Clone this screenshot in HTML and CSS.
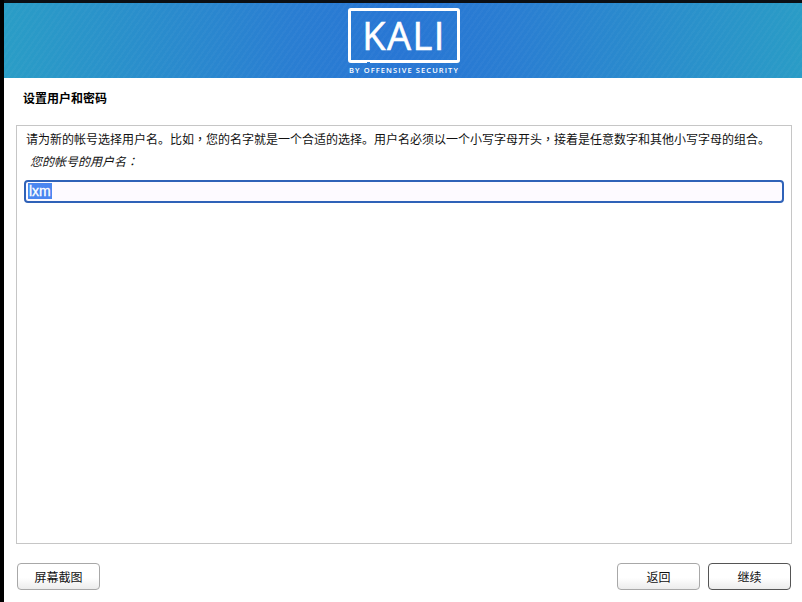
FILE: index.html
```
<!DOCTYPE html>
<html lang="zh-CN">
<head>
<meta charset="utf-8">
<title>设置用户和密码</title>
<link rel="stylesheet" href="styles.css">
</head>
<body>
<div class="edge"></div>
<div class="screen">
  <header class="banner">
    <div class="logo">
      <div class="logo-box"><span class="logo-word">KALI</span></div>
      <div class="logo-sub">BY OFFENSIVE SECURITY</div>
    </div>
  </header>
  <h1 class="title">设置用户和密码</h1>
  <main class="panel">
    <p class="desc">请为新的帐号选择用户名。比如<span class="punct" lang="zh-TW">，</span>您的名字就是一个合适的选择。用户名必须以一个小写字母开头<span class="punct" lang="zh-TW">，</span>接着是任意数字和其他小写字母的组合。</p>
    <p class="label">您的帐号的用户名<span class="punct" lang="zh-TW">：</span></p>
    <div class="field"><span class="sel">lxm</span></div>
  </main>
  <footer class="actions">
    <button class="btn">屏幕截图</button>
    <div class="right">
      <button class="btn btn-back">返回</button>
      <button class="btn btn-next">继续</button>
    </div>
  </footer>
</div>
</body>
</html>
```
FILE: styles.css
```
* { box-sizing: border-box; }
html, body { margin: 0; padding: 0; height: 100%; }
body {
  width: 802px; height: 602px; overflow: hidden; background: #fff;
  display: flex;
  font-family: "Noto Sans CJK SC", "Liberation Sans", sans-serif;
  color: #111;
}
.edge { width: 4px; background: #000; flex: none; }
.screen { flex: 1; display: flex; flex-direction: column; min-width: 0; border-top: 3px solid #0b0f14; }
.banner {
  height: 75px; flex: none;
  background-color: #2877d2;
  background-image:
    repeating-linear-gradient(125deg, rgba(255,255,255,.025) 0 2px, transparent 2px 5px),
    linear-gradient(90deg, #2a9dc6 0%, #2a7ed2 36%, #2876d4 50%, #2a7ed2 64%, #2a9cc6 100%);
  display: flex; justify-content: center;
}
.logo { width: 112px; margin-left: 2px; display: flex; flex-direction: column; align-items: center; padding-top: 5px; color: #fff; }
.logo-box {
  position: relative;
  width: 112px; height: 55px; border: 3px solid #fff; border-radius: 3px;
  display: flex; align-items: center; justify-content: center; padding-bottom: 2px;
}
.logo-box::after {
  content: ""; position: absolute; left: 16px; bottom: -3px; width: 3px; height: 1px; background: #2a7dd3;
}
.logo-word { font-family: "Open Sans", "Liberation Sans", sans-serif; font-size: 38px; font-weight: 400; line-height: 1; letter-spacing: 1.5px; -webkit-text-stroke: .6px #fff; }
.logo-sub { font-family: "Open Sans", "Liberation Sans", sans-serif; font-size: 7.5px; line-height: 9px; margin-top: 3px; letter-spacing: 1.1px; font-weight: 600; white-space: nowrap; }
.title { margin: 12px 0 0 19px; height: 35px; font-size: 12px; line-height: 16px; font-weight: 700; color: #000; }
.panel {
  width: 776px; height: 419px; margin-left: 12px; flex: none;
  border: 1px solid #c6c6c6; padding: 4px 7px;
}
.desc { margin: 0 0 0 2px; font-size: 12px; line-height: 18px; white-space: nowrap; }
.label { margin: 4px 0 0 6px; font-size: 12px; line-height: 18px; font-style: italic; }
.punct { font-family: "Noto Sans CJK TC", "Noto Sans CJK SC", sans-serif; }
.field {
  margin-top: 10px; height: 23px; width: 760px;
  border: 2px solid #2f62b8; border-radius: 4px; background: #fdfaff;
  padding-left: 2px; font: 400 14px/19px "Liberation Sans", sans-serif;
}
.sel { display: inline-block; height: 16px; margin-top: 1px; line-height: 16px; background: #4a86f0; color: #fff; padding: 0 1px; -webkit-text-stroke: .3px #fff; }
.actions { display: flex; justify-content: space-between; margin: 19px 11px 0 13px; }
.right { display: flex; gap: 8px; }
.btn {
  width: 83px; height: 27px; padding: 0; font-family: inherit; font-size: 12px; color: #111;
  border: 1px solid #a8a8a8; border-radius: 4px;
  background: linear-gradient(#fff 55%, #ececec);
}
.btn-next { border-color: #555; }
```
